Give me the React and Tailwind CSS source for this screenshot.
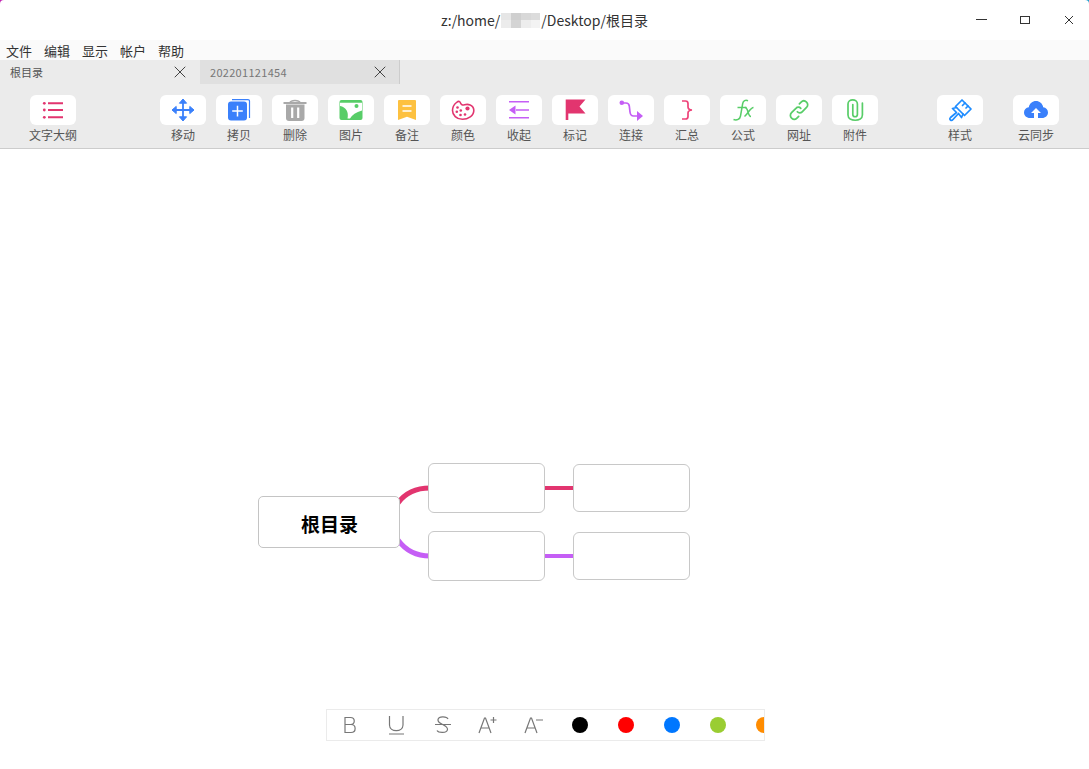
import { X } from 'lucide-react'

const CJK = 'font-["Noto_Sans_CJK_SC","Noto_Sans",sans-serif]'

const PINK = '#e2356f'
const PURPLE = '#c55ef5'
const BLUE = '#3a80fb'
const GREEN = '#58cd68'

function Svg({ children }) {
  return (
    <svg width="24" height="24" viewBox="0 0 24 24" fill="none">
      {children}
    </svg>
  )
}

const icons = {
  outline: (
    <Svg>
      <g stroke={PINK} strokeWidth="2">
        <path d="M7 5.3h15M7 12h15M7 19.3h15" />
      </g>
      <g fill={PINK}>
        <circle cx="3.3" cy="5.3" r="1.4" />
        <circle cx="3.3" cy="12" r="1.4" />
        <circle cx="3.3" cy="19.3" r="1.4" />
      </g>
    </Svg>
  ),
  move: (
    <Svg>
      <path d="M12 4v16M4 12h16" stroke={BLUE} strokeWidth="1.8" />
      <path
        d="M12 1l3.6 4.2H8.4zM12 23l3.6-4.2H8.4zM1 12l4.2-3.6v7.2zM23 12l-4.2-3.6v7.2z"
        fill={BLUE}
        stroke={BLUE}
        strokeLinejoin="round"
      />
    </Svg>
  ),
  copy: (
    <Svg>
      <path d="M5 1.6h16a1.5 1.5 0 0 1 1.5 1.5V20" stroke={BLUE} strokeWidth="1.2" />
      <rect x="1" y="3.6" width="19" height="19" rx="3" fill={BLUE} />
      <path d="M10.5 7.8v10.6M5.2 13h10.6" stroke="#fff" strokeWidth="1.5" />
    </Svg>
  ),
  trash: (
    <Svg>
      <path d="M0.5 5h23" stroke="#a9a9a9" strokeWidth="2" />
      <path d="M7 4.5C8 1.8 16 1.8 17 4.5" stroke="#a9a9a9" strokeWidth="1.6" />
      <path d="M3 6.500h18.500v13.500a3 3 0 0 1-3 3H6a3 3 0 0 1-3-3z" fill="#a9a9a9" />
      <path d="M9.200 9.500v10.500M15.200 9.500v10.500" stroke="#fff" strokeWidth="2.200" />
    </Svg>
  ),
  image: (
    <Svg>
      <rect x="0.5" y="2" width="23" height="20" rx="2" fill={GREEN} />
      <path d="M1 4.800H23V12.500C17 14 13 17 11 20.500H8.500C10 14 7 9 1 8z" fill="#fff" />
      <circle cx="17.500" cy="8" r="2" fill={GREEN} />
    </Svg>
  ),
  note: (
    <Svg>
      <path
        d="M3 3a1 1 0 0 1 1-1h16a1 1 0 0 1 1 1v19l-9-3.2L3 22z"
        fill="#fdc140"
      />
      <path d="M7.5 8h9M7.5 13h9" stroke="#fff" strokeWidth="1.4" />
    </Svg>
  ),
  palette: (
    <Svg>
      <path
        d="M5.5 4.5C8 2.5 9 3.5 9.5 5c.5 1.5 2 2.5 4 1.8c3-1 9-.5 9.3 5.2c.3 6-6 9.3-11.300 9.300C5.500 21.300 1.500 17 1.500 12.500C1.500 9 3 6.500 5.500 4.500z"
        stroke={PINK}
        strokeWidth="1.6"
      />
      <g fill={PINK}>
        <circle cx="16.500" cy="10.500" r="2.100" />
        <circle cx="6.500" cy="9.500" r="1.300" />
        <circle cx="5.800" cy="13.700" r="1.300" />
        <circle cx="9.800" cy="12.500" r="1.300" />
        <circle cx="9.500" cy="17" r="1.300" />
        <circle cx="14" cy="16.500" r="1.300" />
      </g>
    </Svg>
  ),
  collapse: (
    <Svg>
      <path d="M2 3.700h20M9 12h13M2 19.700h20" stroke={PURPLE} strokeWidth="1.500" />
      <path d="M2 12l6.500-4.500v9z" fill={PURPLE} />
    </Svg>
  ),
  flag: (
    <Svg>
      <path d="M2.700 1.500H22.500L16.500 8.500L22.500 15.500H5.300V22H2.700z" fill={PINK} />
    </Svg>
  ),
  connect: (
    <Svg>
      <circle cx="2.800" cy="4.700" r="2.300" fill={PURPLE} />
      <path
        d="M3 5h4c2 0 3 1 3.300 3l.7 6c.3 2.500 1.500 4 3.500 4h5"
        stroke={PURPLE}
        strokeWidth="1.700"
      />
      <path d="M18 13l6 5l-6 5z" fill={PURPLE} />
    </Svg>
  ),
  summary: (
    <Svg>
      <path
        d="M7 3h3.500c1.500 0 2.500 1 2.500 2.500v3.500c0 1.500 1.500 2.800 4 3c-2.500.2-4 1.500-4 3v3.500c0 1.500-1 2.500-2.500 2.500H7"
        stroke="#ee4379"
        strokeWidth="1.700"
      />
    </Svg>
  ),
  formula: (
    <Svg>
      <path
        d="M17 2.800c-2.500-1.200-4.800 0-5.300 2.700L9.500 18c-.5 3-3.500 4.800-7 3.500M6.500 9.500h9"
        stroke={GREEN}
        strokeWidth="1.500"
      />
      <path d="M14 9.500c3.500 0 2.500 9 6 9M22.500 9.500c-3 0-5 5.500-9 9" stroke={GREEN} strokeWidth="1.500" />
    </Svg>
  ),
  link: (
    <Svg>
      <g
        transform="translate(1.600 1.600) scale(.87)"
        stroke={GREEN}
        strokeWidth="2"
        strokeLinecap="round"
      >
        <path d="M10 14c1.500 1.700 4 1.700 5.600 0l5-5c1.800-1.800 1.800-4.500 0-6.200s-4.400-1.800-6.200 0l-2 2" />
        <path d="M14 10c-1.500-1.700-4-1.700-5.600 0l-5 5c-1.800 1.800-1.800 4.500 0 6.200s4.400 1.800 6.200 0l2-2" />
      </g>
    </Svg>
  ),
  attach: (
    <Svg>
      <path
        d="M9.800 6.500v10c0 3 4.600 3 4.600 0V6c0-5.500-9.400-5.500-9.400 0v11c0 7 14.400 7 14.400 0V5"
        stroke={GREEN}
        strokeWidth="1.700"
        strokeLinecap="round"
      />
    </Svg>
  ),
  brush: (
    <Svg>
      <g stroke="#1e8cff" strokeWidth="1.700" strokeLinejoin="round" strokeLinecap="round">
        <path d="M14 2L23 11L16.500 17.500L7.500 8.500z" />
        <path d="M17 5L14.500 7.500M20 8L18 10" />
        <path d="M8.500 9.500L4.500 10.500L8.500 14.500L2.500 19.500C1.500 20.500 1.800 21.500 2.500 22C3.300 22.600 4.200 22.400 5 21.500L10.500 15.500L13.500 19.500L15 16" />
      </g>
    </Svg>
  ),
  cloud: (
    <Svg>
      <path
        d="M6 20C2.500 20 0 17.500 0 14.500s2-5 4.800-5.300C5.500 5.500 8.500 3 12 3s6.500 2.500 7.200 6.200C22 9.500 24 11.500 24 14.500S21.500 20 18 20z"
        fill={BLUE}
      />
      <path d="M12 10l5 5h-3v5h-4v-5H7z" fill="#fff" />
    </Svg>
  ),
}

const tools = [
  ['move', '移动'],
  ['copy', '拷贝'],
  ['trash', '删除'],
  ['image', '图片'],
  ['note', '备注'],
  ['palette', '颜色'],
  ['collapse', '收起'],
  ['flag', '标记'],
  ['connect', '连接'],
  ['summary', '汇总'],
  ['formula', '公式'],
  ['link', '网址'],
  ['attach', '附件'],
]

function Tool({ icon, label }) {
  return (
    <div className="flex w-[46px] flex-col items-center">
      <div className="flex h-[30px] w-[46px] items-center justify-center rounded-[6px] bg-white">
        {icons[icon]}
      </div>
      <span className="mt-[1px] whitespace-nowrap text-[12px] leading-[17px] text-[#555]">{label}</span>
    </div>
  )
}

function Tab({ title, active }) {
  return (
    <div
      className={
        active
          ? 'flex h-[24px] w-[200px] items-center justify-between pl-[10px] pr-[10px]'
          : 'flex h-[24px] w-[200px] items-center justify-between border-r border-[#ccc] bg-[#e0e0e0] pl-[10px] pr-[9px]'
      }
    >
      <span className={active ? 'text-[11px] text-[#555]' : 'text-[11px] tracking-[0.3px] text-[#777]'}>{title}</span>
      <X size={20} strokeWidth={1.2} color="#444" />
    </div>
  )
}

function Node({ className }) {
  return <div className={'absolute rounded-[6px] border border-[#c8c8c8] bg-white ' + className} />
}

function FormatIcon({ children }) {
  return (
    <div className="flex w-[46px] shrink-0 items-center justify-center">
      <svg width="24" height="24" viewBox="0 0 24 24" fill="none" stroke="#777" strokeWidth="1.200">
        {children}
      </svg>
    </div>
  )
}

function Swatch({ color }) {
  return (
    <div className="flex w-[46px] shrink-0 items-center justify-center">
      <div className="h-[16px] w-[16px] shrink-0 rounded-full" style={{ backgroundColor: color }} />
    </div>
  )
}

export default function App() {
  return (
    <div className="h-screen w-full bg-[linear-gradient(90deg,#c020b0_50%,#20a0d0_50%)]">
      <div className={'flex h-full w-full flex-col overflow-hidden rounded-t-[4px] bg-white ' + CJK}>
        {/* Title bar */}
        <div className="relative flex h-[40px] shrink-0 items-center justify-center text-[14px] text-[#333]">
          <span className="flex items-center">
            z:/home/
            <span className="mx-[1px] grid h-[15px] w-[39px] grid-cols-4 grid-rows-2">
              <span className="bg-[#e6e6e6]" />
              <span className="bg-[#cfcfcf]" />
              <span className="bg-[#d8d8d8]" />
              <span className="bg-[#dcdcdc]" />
              <span className="bg-[#ececec]" />
              <span className="bg-[#d4d4d4]" />
              <span className="bg-[#ededed]" />
              <span className="bg-[#f3f3f3]" />
            </span>
            /Desktop/根目录
          </span>
          <div className="absolute right-[15px] top-[15px] flex items-center gap-[33px]">
            <svg width="11" height="10" viewBox="0 0 11 10" stroke="#333">
              <path d="M0 4.500h11" />
            </svg>
            <svg width="11" height="10" viewBox="0 0 11 10" fill="none" stroke="#333">
              <rect x="0.500" y="1.500" width="9" height="7" />
            </svg>
            <svg width="10" height="10" viewBox="0 0 10 10" stroke="#333">
              <path d="M1 1l8 8M9 1l-8 8" />
            </svg>
          </div>
        </div>

        {/* Menu */}
        <div className="flex h-[20px] shrink-0 items-center gap-[12px] bg-[#fafafa] pl-[6px] text-[13px] leading-none text-[#333]">
          <span>文件</span>
          <span>编辑</span>
          <span>显示</span>
          <span>帐户</span>
          <span>帮助</span>
        </div>

        {/* Tabs + toolbar */}
        <div className="h-[89px] shrink-0 border-b border-[#ccc] bg-[#ebebeb]">
          <div className="flex">
            <Tab title="根目录" active />
            <Tab title="202201121454" />
          </div>
          <div className="mt-[11px] flex pl-[30px]">
            <Tool icon="outline" label="文字大纲" />
            <div className="ml-[84px] flex gap-[10px]">
              {tools.map(([icon, label]) => (
                <Tool key={label} icon={icon} label={label} />
              ))}
            </div>
            <div className="ml-[59px] flex gap-[30px]">
              <Tool icon="brush" label="样式" />
              <Tool icon="cloud" label="云同步" />
            </div>
          </div>
        </div>

        {/* Canvas: the mind map sits at free positions */}
        <div className="relative min-h-0 flex-1">
          <svg className="absolute left-0 top-0" width="1089" height="620" fill="none">
            <path d="M398 354C406 343 416 339 430 339" stroke={PINK} strokeWidth="5" />
            <path d="M398 391C406 402 416 407 430 407" stroke={PURPLE} strokeWidth="5" />
            <path d="M544 339H574" stroke={PINK} strokeWidth="4" />
            <path d="M544 407H574" stroke={PURPLE} strokeWidth="4" />
          </svg>
          <div className="absolute left-[258px] top-[347px] flex h-[52px] w-[142px] items-center justify-center rounded-[5px] border border-[#c4c4c4] bg-white pt-[5px] pl-[1px] text-[19px] font-bold text-black">
            根目录
          </div>
          <Node className="left-[428px] top-[314px] h-[50px] w-[117px]" />
          <Node className="left-[428px] top-[382px] h-[50px] w-[117px]" />
          <Node className="left-[573px] top-[315px] h-[48px] w-[117px]" />
          <Node className="left-[573px] top-[383px] h-[48px] w-[117px]" />

          {/* Format bar */}
          <div className="absolute left-[326px] top-[560px] flex h-[32px] w-[439px] items-center overflow-hidden border border-[#ebebeb] bg-white">
            <FormatIcon>
              <path d="M7 4.500h5.500c5 0 5 7 0 7H7zM7 11.500h6c5.500 0 5.500 8 0 8H7z" />
            </FormatIcon>
            <FormatIcon>
              <path d="M5.500 3v9c0 7.500 13.500 7.500 13.500 0V3M5 21h15" />
            </FormatIcon>
            <FormatIcon>
              <path d="M18 6c-1-2.500-9-3.500-10 .500c-1 5 10 5 9.500 10c-.5 4-9 3.500-10.500 1M5 11.500h16" />
            </FormatIcon>
            <FormatIcon>
              <path d="M3 20L8.500 5h1L15 20M5 15h8M17.500 4v6M14.500 7h6" />
            </FormatIcon>
            <FormatIcon>
              <path d="M3 20L8.500 5h1L15 20M5 15h8M14 7h7" />
            </FormatIcon>
            <Swatch color="#000000" />
            <Swatch color="#ff0000" />
            <Swatch color="#0077ff" />
            <Swatch color="#9acd32" />
            <Swatch color="#ff8c00" />
          </div>
        </div>
      </div>
    </div>
  )
}
